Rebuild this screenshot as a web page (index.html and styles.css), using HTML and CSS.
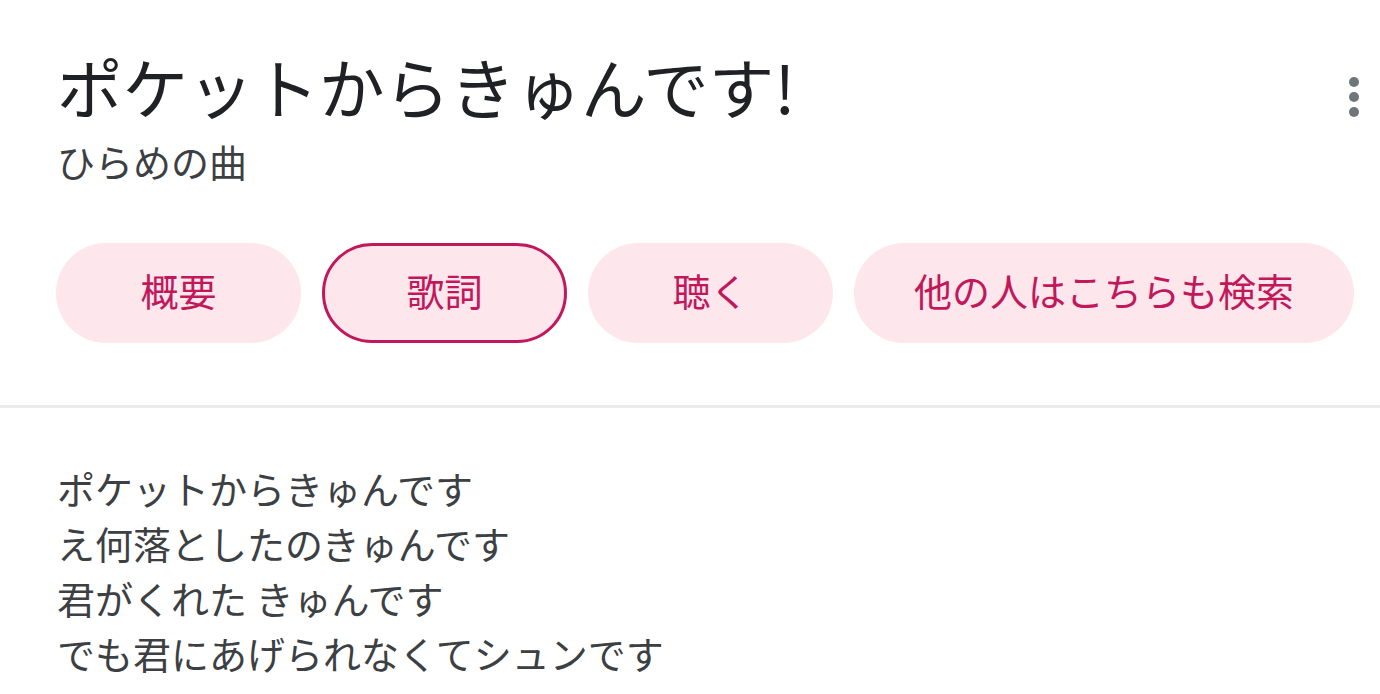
FILE: index.html
```html
<!DOCTYPE html>
<html lang="ja">
<head>
    <meta charset="UTF-8">
    <meta name="viewport" content="width=device-width, initial-scale=1.0">
    <title>ポケットからきゅんです!</title>
    <link rel="stylesheet" href="styles.css">
</head>
<body>
    <header class="song-header">
        <div class="song-info">
            <h1 class="song-title">ポケットからきゅんです!</h1>
            <p class="song-artist">ひらめの曲</p>
        </div>
        <button class="more-button" aria-label="その他">
            <span class="dot"></span>
            <span class="dot"></span>
            <span class="dot"></span>
        </button>
    </header>

    <!-- タブ -->
    <nav class="chips">
        <a class="chip" href="#">概要</a>
        <a class="chip selected" href="#">歌詞</a>
        <a class="chip" href="#">聴く</a>
        <a class="chip" href="#">他の人はこちらも検索</a>
    </nav>

    <hr class="divider">

    <section class="lyrics">
        <p>ポケットからきゅんです</p>
        <p>え何落としたのきゅんです</p>
        <p>君がくれた きゅんです</p>
        <p>でも君にあげられなくてシュンです</p>
    </section>
</body>
</html>
```

FILE: styles.css
```css
body {
    font-family: "Noto Sans CJK JP", "Noto Sans", sans-serif;
    margin: 0;
    padding: 0;
    background-color: #ffffff;
    color: #202124;
    overflow: hidden;
}
.song-header {
    display: flex;
    justify-content: space-between;
    align-items: flex-start;
    padding: 40px 21px 0 57px;
}
.song-title {
    margin: 0;
    font-size: 65.5px;
    font-weight: 400;
    line-height: 92px;
    color: #202124;
}
.song-artist {
    margin: 4px 0 0;
    font-size: 38px;
    line-height: 50px;
    color: #3c4043;
}
.more-button {
    display: flex;
    flex-direction: column;
    gap: 5px;
    margin-top: 37px;
    padding: 0;
    border: none;
    background: none;
}
.dot {
    width: 10px;
    height: 10px;
    border-radius: 50%;
    background-color: #70757a;
}
.chips {
    display: flex;
    gap: 21px;
    padding: 57px 0 0 56px;
}
.chip {
    box-sizing: border-box;
    display: flex;
    align-items: center;
    justify-content: center;
    min-width: 245px;
    height: 100px;
    padding: 0 60px 7px;
    border-radius: 50px;
    background-color: #fde7ec;
    color: #c2185b;
    font-size: 38px;
    text-decoration: none;
}
.chip.selected {
    border: 3px solid #c2185b;
}
.divider {
    margin: 62px 0 0;
    border: none;
    height: 3px;
    background-color: #ebebeb;
}
.lyrics {
    padding: 52px 0 0 57px;
}
.lyrics p {
    margin: 0;
    font-size: 38px;
    line-height: 55px;
    color: #3c4043;
}
```
